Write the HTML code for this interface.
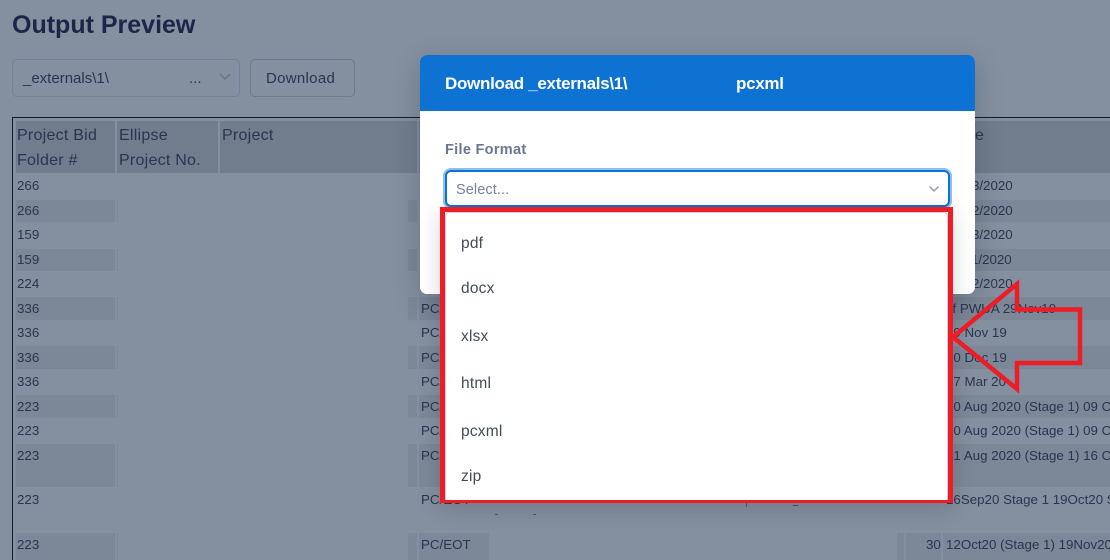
<!DOCTYPE html>
<html><head><meta charset="utf-8"><style>
html,body{margin:0;padding:0;width:1110px;height:560px;overflow:hidden;background:#848f9f;font-family:"Liberation Sans",sans-serif}
div,span{position:absolute;white-space:nowrap}
.s{background:#7c8797}
.h{background:#717c8c;top:121px;height:52px}
.t{font-size:13.33px;line-height:20px;color:#2a3550;margin-top:1px}
.th{font-size:16px;line-height:25px;color:#2a3550;letter-spacing:.25px;margin-top:1px}
.o{left:461px;font-size:15.5px;line-height:20px;color:#434b5a;letter-spacing:.2px;margin-top:1px}
</style></head><body>
<div style="left:12px;top:9px;font-size:25px;line-height:32px;font-weight:bold;color:#1a2748;letter-spacing:0">Output Preview</div>
<div style="left:12px;top:59px;width:226px;height:36px;border:1px solid #71809c;border-radius:5px"></div>
<div style="left:23px;top:69px;font-size:15px;line-height:20px;color:#2a3550">_externals\1\</div>
<div style="left:189px;top:69px;font-size:15px;line-height:20px;color:#2a3550">...</div>
<svg style="position:absolute;left:218px;top:72px" width="14" height="10"><path d="M2 2l5 5 5-5" fill="none" stroke="#66758f" stroke-width="1.4"/></svg>
<div style="left:250px;top:59px;width:103px;height:36px;border:1px solid #6b7a92;border-radius:5px"></div>
<div style="left:266px;top:69px;font-size:15px;line-height:20px;color:#2a3550;letter-spacing:.3px">Download</div>

<div style="left:12px;top:117px;width:1098px;height:1px;background:#101b2e"></div>
<div style="left:12px;top:117px;width:1px;height:443px;background:#101b2e"></div>

<div class="h" style="left:16px;width:99px"></div>
<div class="h" style="left:117px;width:101px"></div>
<div class="h" style="left:220px;width:197px"></div>
<div class="h" style="left:419px;width:691px"></div>
<div class="th" style="left:17px;top:122px">Project Bid</div>
<div class="th" style="left:17px;top:147px">Folder #</div>
<div class="th" style="left:119px;top:122px">Ellipse</div>
<div class="th" style="left:119px;top:147px">Project No.</div>
<div class="th" style="left:222px;top:122px">Project</div>
<div class="th" style="left:975px;top:122px">e</div>

<div class="s" style="left:16px;top:200px;width:99px;height:22px"></div>
<div class="s" style="left:117px;top:200px;width:1px;height:22px"></div>
<div class="s" style="left:408px;top:200px;width:9px;height:22px"></div>
<div class="s" style="left:943px;top:200px;width:167px;height:22px"></div>
<div class="s" style="left:16px;top:249px;width:99px;height:22px"></div>
<div class="s" style="left:117px;top:249px;width:1px;height:22px"></div>
<div class="s" style="left:408px;top:249px;width:9px;height:22px"></div>
<div class="s" style="left:943px;top:249px;width:167px;height:22px"></div>
<div class="s" style="left:16px;top:297px;width:99px;height:23px"></div>
<div class="s" style="left:117px;top:297px;width:1px;height:23px"></div>
<div class="s" style="left:408px;top:297px;width:9px;height:23px"></div>
<div class="s" style="left:419px;top:297px;width:691px;height:23px"></div>
<div class="s" style="left:16px;top:346px;width:99px;height:23px"></div>
<div class="s" style="left:117px;top:346px;width:1px;height:23px"></div>
<div class="s" style="left:408px;top:346px;width:9px;height:23px"></div>
<div class="s" style="left:419px;top:346px;width:691px;height:23px"></div>
<div class="s" style="left:16px;top:395px;width:99px;height:23px"></div>
<div class="s" style="left:117px;top:395px;width:1px;height:23px"></div>
<div class="s" style="left:408px;top:395px;width:9px;height:23px"></div>
<div class="s" style="left:419px;top:395px;width:691px;height:23px"></div>
<div class="s" style="left:16px;top:444px;width:99px;height:43px"></div>
<div class="s" style="left:117px;top:444px;width:1px;height:43px"></div>
<div class="s" style="left:408px;top:444px;width:9px;height:43px"></div>
<div class="s" style="left:419px;top:444px;width:691px;height:43px"></div>
<div class="s" style="left:16px;top:533px;width:99px;height:27px"></div>
<div class="s" style="left:117px;top:533px;width:1px;height:27px"></div>
<div class="s" style="left:408px;top:533px;width:9px;height:27px"></div>
<div class="s" style="left:419px;top:533px;width:70px;height:27px"></div>
<div class="s" style="left:897px;top:533px;width:7px;height:27px"></div>
<div class="s" style="left:906px;top:533px;width:35px;height:27px"></div>
<div class="s" style="left:943px;top:533px;width:167px;height:27px"></div>

<div class="t" style="left:17px;top:175px">266</div>
<div class="t" style="left:17px;top:200px">266</div>
<div class="t" style="left:17px;top:224px">159</div>
<div class="t" style="left:17px;top:249px">159</div>
<div class="t" style="left:17px;top:273px">224</div>
<div class="t" style="left:17px;top:298px">336</div>
<div class="t" style="left:17px;top:322px">336</div>
<div class="t" style="left:17px;top:347px">336</div>
<div class="t" style="left:17px;top:371px">336</div>
<div class="t" style="left:17px;top:396px">223</div>
<div class="t" style="left:17px;top:420px">223</div>
<div class="t" style="left:17px;top:445px">223</div>
<div class="t" style="left:17px;top:489px">223</div>
<div class="t" style="left:17px;top:534px">223</div>

<div class="t" style="left:421px;top:298px">PC/EOT</div>
<div class="t" style="left:421px;top:322px">PC/EOT</div>
<div class="t" style="left:421px;top:347px">PC/EOT</div>
<div class="t" style="left:421px;top:371px">PC/EOT</div>
<div class="t" style="left:421px;top:396px">PC/EOT</div>
<div class="t" style="left:421px;top:420px">PC/EOT</div>
<div class="t" style="left:421px;top:445px">PC/EOT</div>
<div class="t" style="left:421px;top:489px">PC/EOT</div>
<div class="t" style="left:421px;top:534px">PC/EOT</div>

<div class="t" style="left:946px;top:175px">18/03/2020</div>
<div class="t" style="left:946px;top:200px">12/02/2020</div>
<div class="t" style="left:946px;top:224px">18/03/2020</div>
<div class="t" style="left:946px;top:249px">11/01/2020</div>
<div class="t" style="left:946px;top:273px">12/02/2020</div>
<div class="t" style="left:945px;top:298px">of PWUA 29Nov19</div>
<div class="t" style="left:946px;top:322px">29 Nov 19</div>
<div class="t" style="left:946px;top:347px">10 Dec 19</div>
<div class="t" style="left:946px;top:371px">17 Mar 20</div>
<div class="t" style="left:946px;top:396px">30 Aug 2020 (Stage 1) 09 Oct 2020</div>
<div class="t" style="left:946px;top:420px">30 Aug 2020 (Stage 1) 09 Oct 2020</div>
<div class="t" style="left:946px;top:445px">21 Aug 2020 (Stage 1) 16 Oct 2020</div>
<div class="t" style="left:946px;top:489px">16Sep20 Stage 1 19Oct20 Stage 2</div>
<div class="t" style="left:926px;top:534px">30</div>
<div class="t" style="left:946px;top:534px">12Oct20 (Stage 1) 19Nov20</div>

<div style="left:495px;top:514px;width:3px;height:1px;background:#4b566c"></div>
<div style="left:533px;top:514px;width:3px;height:1px;background:#4b566c"></div>
<div style="left:746px;top:503px;width:1px;height:4px;background:#4b566c"></div>
<div style="left:793px;top:505px;width:5px;height:1px;background:#4b566c"></div>

<div style="left:420px;top:55px;width:555px;height:239px;background:#fff;border-radius:7px;box-shadow:0 8px 28px rgba(20,30,50,.22);overflow:hidden">
  <div style="left:0;top:0;width:555px;height:56px;background:#0d72d2"></div>
  <div style="left:25px;top:18px;width:184px;overflow:hidden;font-size:17px;line-height:22px;font-weight:bold;color:#fff;letter-spacing:-.3px">Download _externals\1\</div>
  <div style="left:316px;top:18px;font-size:17px;line-height:22px;font-weight:bold;color:#fff;letter-spacing:-.3px">pcxml</div>
  <div style="left:25px;top:83px;font-size:14.5px;line-height:20px;margin-top:2px;font-weight:bold;color:#6a788f;letter-spacing:.3px">File Format</div>
  <div style="left:25px;top:115px;width:501px;height:33px;border:2px solid #0d72d2;border-radius:6px;box-shadow:0 0 0 2px #8fbfee;background:#fff"></div>
  <div style="left:36px;top:125px;font-size:14.5px;line-height:20px;color:#76839a;letter-spacing:.1px">Select...</div>
  <svg style="position:absolute;left:507px;top:129px" width="14" height="10"><path d="M2.500 2.500l4.500 4.500 4.500-4.500" fill="none" stroke="#8b98ae" stroke-width="1.400"/></svg>
</div>

<div style="left:440px;top:207px;width:503px;height:286px;border:5px solid #ee1c25;background:#fff;box-shadow:0 6px 20px rgba(20,30,50,.18)"></div>
<div style="left:445px;top:212px;width:501px;height:287px;border:1px solid #c6cfe2;border-bottom:0;border-radius:4px 4px 0 0;background:#fff"></div>
<div class="o" style="top:233px">pdf</div>
<div class="o" style="top:278px">docx</div>
<div class="o" style="top:326px">xlsx</div>
<div class="o" style="top:373px">html</div>
<div class="o" style="top:421px">pcxml</div>
<div class="o" style="top:466px">zip</div>

<svg style="position:absolute;left:0;top:0" width="1110" height="560"><path d="M953 337L1017 284V309.500H1080V363H1017V389Z" fill="none" stroke="#ee1c25" stroke-width="4.500" stroke-linejoin="miter"/></svg>
</body></html>
